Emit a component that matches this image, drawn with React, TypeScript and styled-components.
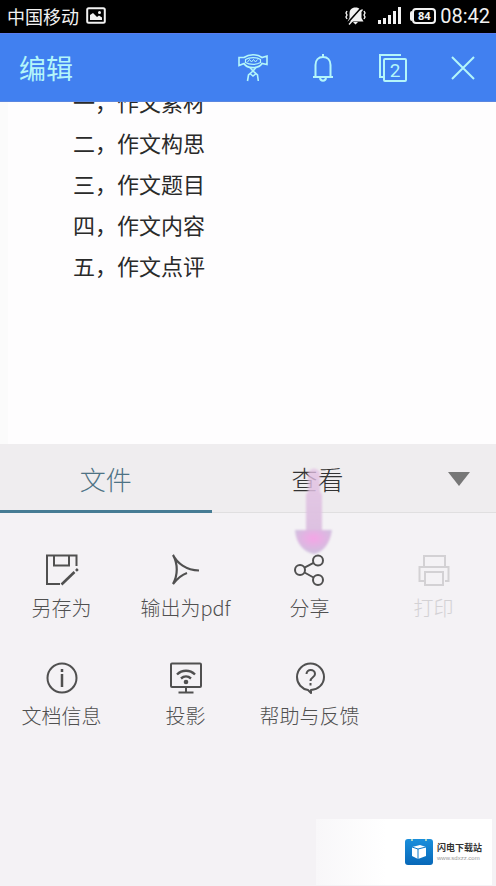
import React from "react";
import styled, { createGlobalStyle } from "styled-components";

const GlobalStyle = createGlobalStyle`
  *, *::before, *::after { box-sizing: border-box; }
  html, body, #root { height: 100%; }
  body {
    margin: 0;
    background: #f4f2f5;
    font-family: "Noto Sans CJK SC", "Noto Sans", sans-serif;
  }
  button { font-family: inherit; border: 0; padding: 0; background: none; cursor: pointer; }
  svg { display: block; flex: none; }
`;

const Screen = styled.div`
  position: relative;
  display: flex;
  flex-direction: column;
  min-height: 100%;
  overflow: hidden;
`;

const StatusBar = styled.div`
  display: flex;
  align-items: center;
  justify-content: space-between;
  height: 33px;
  padding: 0 6px 2px 7px;
  background: #000;
  color: #f2f2f2;
`;

const StatusGroup = styled.div<{ $gap: number }>`
  display: flex;
  align-items: center;
  gap: ${(p) => p.$gap}px;
`;

const Carrier = styled.span`
  font-size: 18px;
  line-height: 24px;
`;

const Clock = styled.time`
  font-family: Roboto, sans-serif;
  font-size: 20px;
  line-height: 24px;
`;

const Signals = styled(StatusGroup)`
  padding-right: 4px;
`;

const Header = styled.header`
  display: flex;
  align-items: center;
  justify-content: space-between;
  height: 69px;
  padding: 0 11px 0 19px;
  background: #4180f0;
  border-top: 1px solid #5a7df0;
  border-bottom: 1px solid #5a86e0;
  color: #b4f6fa;
`;

const Title = styled.h1`
  margin: 0;
  font-size: 27px;
  font-weight: 400;
  line-height: 36px;
`;

const Tools = styled.div`
  display: flex;
  gap: 26px;
`;

const ToolButton = styled.button`
  display: grid;
  place-items: center;
  width: 44px;
  height: 44px;
  color: inherit;
`;

const Page = styled.main`
  height: 342px;
  overflow: hidden;
  background: #fefdfe;
  border-left: 8px solid #fbfbfb;
  padding-left: 65px;
`;

const Outline = styled.div`
  display: flex;
  flex-direction: column;
  margin-top: -21px;
`;

const OutlineLine = styled.p`
  margin: 0;
  font-size: 22px;
  line-height: 41px;
  color: #2a2a2a;
`;

const TabBar = styled.div`
  display: grid;
  grid-template-columns: 3fr 3fr 1fr;
  height: 69px;
  padding-right: 2px;
  background: #efedef;
  border-bottom: 1px solid #e0dfe0;
`;

const Tab = styled.button<{ $active?: boolean }>`
  height: 69px;
  padding-top: 4px;
  font-size: 26px;
  font-weight: 300;
  line-height: 36px;
  color: ${(p) => (p.$active ? "#4d7284" : "#333")};
  border-bottom: 3px solid ${(p) => (p.$active ? "#467c94" : "transparent")};
`;

const Collapse = styled.button`
  display: grid;
  place-items: center;
  color: #777;
`;

const Actions = styled.section`
  display: grid;
  grid-template-columns: repeat(4, 1fr);
  grid-auto-rows: 108px;
  padding-top: 40px;
`;

const Action = styled.button`
  display: flex;
  flex-direction: column;
  align-items: center;
  gap: 7px;
  padding-right: 1px;
  font-size: 20px;
  font-weight: 300;
  line-height: 28px;
  white-space: nowrap;
  color: #505050;

  &:disabled { color: #d3d1d4; cursor: default; }
`;

const Pointer = styled.div`
  position: absolute;
  top: 464px;
  left: calc(62.5% - 21px);
  pointer-events: none;
`;

const Watermark = styled.a`
  position: absolute;
  right: 4px;
  bottom: 1px;
  display: flex;
  align-items: center;
  justify-content: flex-end;
  gap: 4px;
  width: 176px;
  height: 66px;
  padding-right: 10px;
  background: linear-gradient(90deg, #f8f7f9, #fff 40%);
  text-decoration: none;
`;

const Brand = styled.span`
  display: flex;
  flex-direction: column;
`;

const BrandName = styled.strong`
  font-size: 9px;
  font-weight: 700;
  line-height: 12px;
  color: #333;
`;

const BrandUrl = styled.small`
  font-family: "Liberation Sans", sans-serif;
  font-size: 6px;
  line-height: 8px;
  color: #999;
`;

const stroke = { fill: "none", stroke: "currentColor", strokeWidth: 2 } as const;

const PhotoIcon = () => (
  <svg width="20" height="17" viewBox="0 0 20 17" aria-hidden="true">
    <rect x="1.2" y="1.2" width="17.6" height="14.6" rx="1.5" fill="none" stroke="currentColor" strokeWidth="2" />
    <path d="M4 13V8l3-2 4 4 2-1.500 3 2V13z" fill="currentColor" />
    <circle cx="13.500" cy="5.500" r="1.500" fill="currentColor" />
  </svg>
);

const MutedIcon = () => (
  <svg width="21" height="18" viewBox="0 0 21 18" aria-hidden="true">
    <path d="M10.500 0.500c4 0 6 2.500 6 6v4.500l2 3.500h-16l2-3.500V6.500C4.500 3 6.500.5 10.500.5zM8 15h5l-2.500 2.500z" fill="currentColor" />
    <path d="M2.500 16 16 1" stroke="#000" strokeWidth="1.600" />
    <path d="M4 17.500 17.500 2.500" stroke="currentColor" strokeWidth="1.400" />
    <path d="M2 4l-1 2 1 2-1 2 1 2M19 4l1 2-1 2 1 2-1 2" fill="none" stroke="currentColor" strokeWidth="1.400" />
  </svg>
);

const SignalIcon = () => (
  <svg width="24" height="17" viewBox="0 0 24 17" fill="currentColor" aria-hidden="true">
    <rect x="0" y="13" width="3" height="4" />
    <rect x="5" y="11" width="3" height="6" />
    <rect x="10" y="8" width="3" height="9" />
    <rect x="15" y="4" width="3" height="13" />
    <rect x="20" y="0" width="3" height="17" />
  </svg>
);

const Battery = styled.span`
  display: flex;
  align-items: center;

  &::before {
    content: "";
    width: 2px;
    height: 10px;
    background: currentColor;
    border-radius: 2px 0 0 2px;
  }
`;

const BatteryLevel = styled.span`
  width: 24px;
  height: 16px;
  border: 2px solid currentColor;
  border-radius: 4px;
  font-family: "Open Sans", sans-serif;
  font-size: 11px;
  font-weight: 700;
  line-height: 12px;
  text-align: center;
`;

const MascotIcon = () => (
  <svg width="32" height="30" viewBox="0 0 32 30" fill="none" stroke="currentColor" strokeWidth="1.600" aria-hidden="true">
    <path d="M7 4.500C12 .8 20 .8 25 4.500L30 3v8.500l-5-1C22 16 10 16 7 10.500l-5 2V4.500z" />
    <path d="M8.500 6.500c4-2.500 11-2.500 15 0v3c-4 2.500-11 2.500-15 0z" strokeWidth="1.200" />
    <path d="M10.500 9l2-2.500 2 2.500 2-2.500 2 2.500 2-2.500" strokeWidth="1" />
    <path d="M13 14.500l3 3.500 3-3.500M16 18l-4.500 4-1 6M16 18l4.500 4 .8 6M13.500 21l2.500 2 2.500-2" />
  </svg>
);

const BellIcon = () => (
  <svg width="24" height="30" viewBox="0 0 24 30" aria-hidden="true" {...stroke}>
    <path d="M12 1v3M4.500 23V12c0-5 3-8 7.500-8s7.500 3 7.500 8v11M2 24h20M9 25c.5 3.500 5.500 3.500 6 0" />
  </svg>
);

const PagesIcon = () => (
  <svg width="30" height="30" viewBox="0 0 30 30" aria-hidden="true" {...stroke}>
    <path d="M23 2H2v22h3" />
    <rect x="6" y="6" width="22" height="22" rx="1" />
    <text x="17" y="24" textAnchor="middle" fontFamily="Roboto, sans-serif" fontSize="19" fill="currentColor" stroke="none">2</text>
  </svg>
);

const CloseIcon = () => (
  <svg width="26" height="26" viewBox="0 0 26 26" aria-hidden="true" {...stroke}>
    <path d="M2 2l22 22M24 2L2 24" />
  </svg>
);

const ActionSvg = ({ children }: { children: React.ReactNode }) => (
  <svg width="34" height="34" viewBox="0 0 34 34" aria-hidden="true" {...stroke}>
    {children}
  </svg>
);

const actions = [
  {
    label: "另存为",
    icon: <><path d="M31.500 13V2.500H2V31h13M9 3v9.500h15V3" /><path d="M16.500 31.500L29.500 19" strokeWidth="2.600" /><path d="M31 17.800l1.800-1.800" strokeWidth="2.600" /></>,
  },
  {
    label: "输出为pdf",
    icon: <path d="M4 2c4 8 13 15 26 15.500M4 2c5 9 5 20 0 29 4-5 8-9 14-11" strokeWidth="2.200" />,
  },
  {
    label: "分享",
    icon: <><circle cx="7" cy="17" r="5" /><circle cx="25" cy="7.500" r="5" /><circle cx="25" cy="27" r="5" /><path d="M11.500 14.700l9-4.800M11.500 19.500l9 5" /></>,
  },
  {
    label: "打印",
    disabled: true,
    icon: <><path d="M7 13V3h21v10M7 28H2.500V14h29v14H28" /><rect x="8" y="19" width="18" height="13" /></>,
  },
  {
    label: "文档信息",
    icon: <><circle cx="17" cy="17" r="14.500" /><path d="M17 13v13M17 8v3" strokeWidth="2.500" /></>,
  },
  {
    label: "投影",
    icon: <><rect x="2" y="2.500" width="30" height="23.500" rx="1" /><path d="M17 26v5M9.500 31.500h15" /><path d="M8 13.500c5-5 13-5 18 0M12 17.500c3-2.600 7-2.600 10 0" strokeWidth="2.400" /><circle cx="17" cy="21" r="2.300" fill="currentColor" stroke="none" /></>,
  },
  {
    label: "帮助与反馈",
    icon: <><path d="M18 32v-3c7-.5 13-5.500 13-13A13.500 13.500 0 0 0 4 16c0 7 5 12 11 13z" strokeLinejoin="round" /><path d="M13.500 13c0-5.500 8.500-5 8.500 0 0 3.500-4.500 3-4.500 7M17.500 22v2.500" /></>,
  },
];

const outline = ["一，作文素材", "二，作文构思", "三，作文题目", "四，作文内容", "五，作文点评"];

export default function App() {
  return (
    <Screen>
      <GlobalStyle />
      <StatusBar>
        <StatusGroup $gap={7}>
          <Carrier>中国移动</Carrier>
          <PhotoIcon />
        </StatusGroup>
        <StatusGroup $gap={4}>
          <Signals $gap={12}>
            <MutedIcon />
            <SignalIcon />
          </Signals>
          <Battery><BatteryLevel>84</BatteryLevel></Battery>
          <Clock>08:42</Clock>
        </StatusGroup>
      </StatusBar>
      <Header>
        <Title>编辑</Title>
        <Tools>
          <ToolButton aria-label="助手"><MascotIcon /></ToolButton>
          <ToolButton aria-label="通知"><BellIcon /></ToolButton>
          <ToolButton aria-label="页面"><PagesIcon /></ToolButton>
          <ToolButton aria-label="关闭"><CloseIcon /></ToolButton>
        </Tools>
      </Header>
      <Page>
        <Outline>
          {outline.map((line) => <OutlineLine key={line}>{line}</OutlineLine>)}
        </Outline>
      </Page>
      <TabBar role="tablist">
        <Tab role="tab" aria-selected="true" $active>文件</Tab>
        <Tab role="tab" aria-selected="false">查看</Tab>
        <Collapse aria-label="收起">
          <svg width="22" height="14" viewBox="0 0 22 14" aria-hidden="true"><path d="M0 0h22L11 14z" fill="currentColor" /></svg>
        </Collapse>
      </TabBar>
      <Actions>
        {actions.map((a) => (
          <Action key={a.label} disabled={a.disabled}>
            <ActionSvg>{a.icon}</ActionSvg>
            {a.label}
          </Action>
        ))}
      </Actions>
      <Pointer>
        <svg width="48" height="94" viewBox="0 0 48 94" aria-hidden="true">
          <defs>
            <linearGradient id="shaft" x1="0" y1="0" x2="0" y2="1">
              <stop offset="0" stopColor="#e2bfe2" stopOpacity="0.75" />
              <stop offset="1" stopColor="#dcc0e0" />
            </linearGradient>
            <radialGradient id="head" cx="0.5" cy="0.35" r="0.55">
              <stop offset="0" stopColor="#f5a5e6" />
              <stop offset="1" stopColor="#d2bfdf" />
            </radialGradient>
            <filter id="glow" x="-30%" y="-30%" width="160%" height="160%"><feGaussianBlur stdDeviation="1" /></filter>
          </defs>
          <g filter="url(#glow)">
            <path d="M19 8q6-7 12 0v20l2 2v38H17V30l2-2z" fill="url(#shaft)" />
            <path d="M6 66h37c-2 14-9 22-18 24C15 88 7 80 6 66z" fill="url(#head)" />
          </g>
        </svg>
      </Pointer>
      <Watermark href="#">
        <svg width="28" height="28" viewBox="0 0 28 28" aria-hidden="true">
          <defs>
            <linearGradient id="bag" x1="0" y1="0" x2="0" y2="1">
              <stop offset="0" stopColor="#1a8fdc" />
              <stop offset="1" stopColor="#0868b8" />
            </linearGradient>
          </defs>
          <rect y="1" width="28" height="26" rx="3" fill="url(#bag)" />
          <path d="M7 1v2M21 1v2" stroke="#d8ecc0" strokeWidth="1.500" />
          <path d="M7 9l8-2 6 2v9l-8 3-6-3z" fill="#fff" />
          <path d="M7 9l6 2 8-2M13 11v10" fill="none" stroke="#0b78c8" strokeWidth="1" />
        </svg>
        <Brand>
          <BrandName>闪电下载站</BrandName>
          <BrandUrl>www.sdxzz.com</BrandUrl>
        </Brand>
      </Watermark>
    </Screen>
  );
}
